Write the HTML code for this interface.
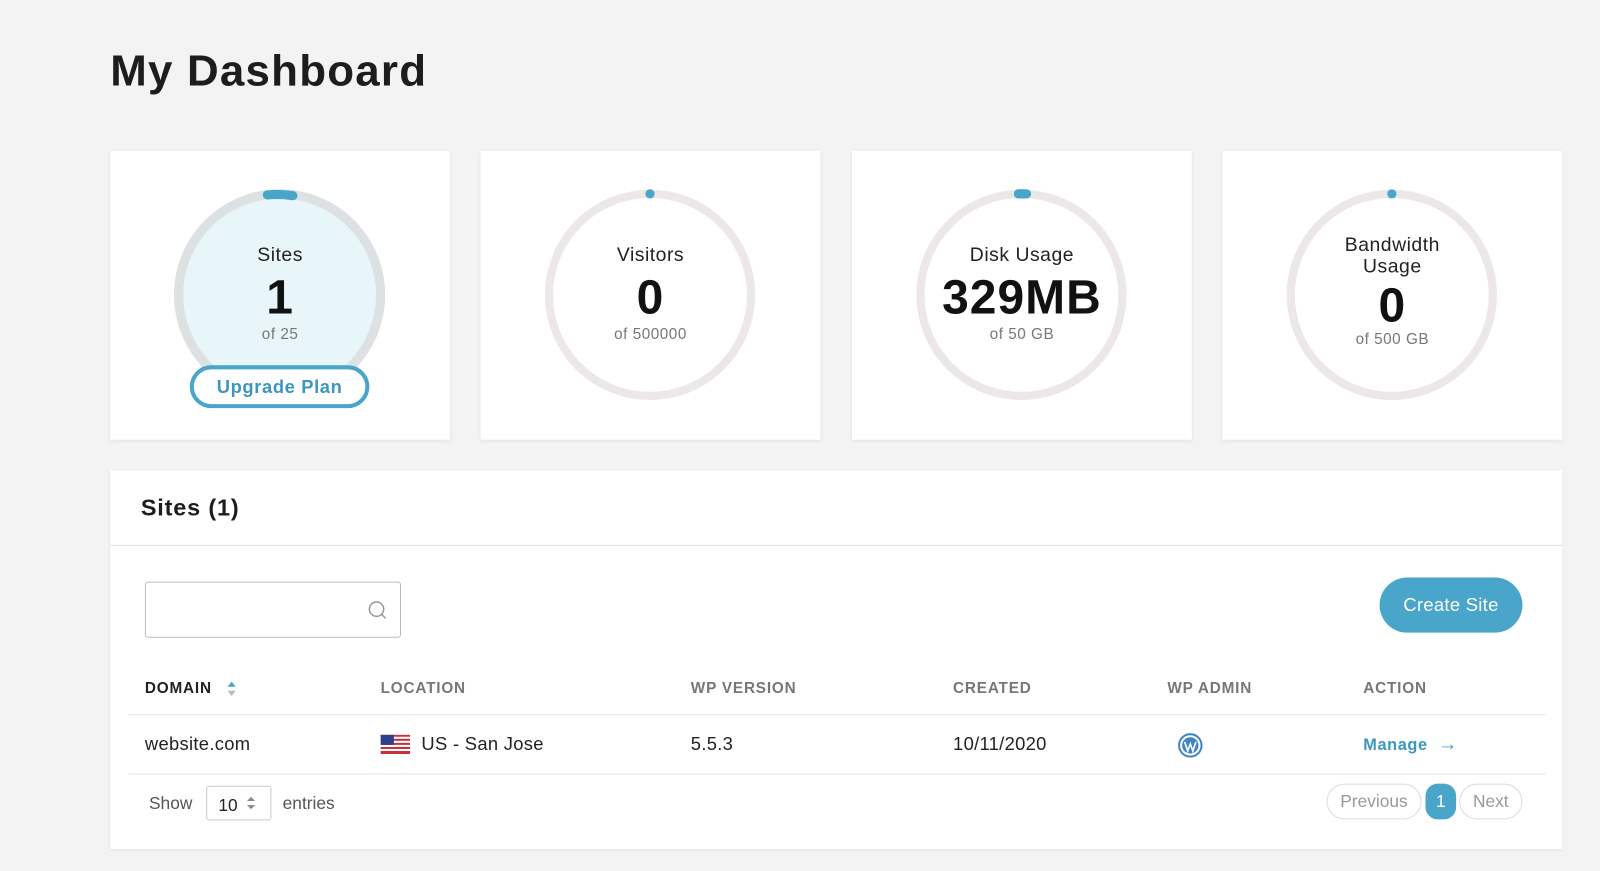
<!DOCTYPE html>
<html><head><style>
body{margin:0;width:1600px;height:871px;background:#f4f3f4;font-family:"Liberation Sans",sans-serif;color:#1d1d1f;position:relative;overflow:hidden}
#w{position:absolute;left:0;top:0;width:1568px;height:854px;transform:scale(1.0204);transform-origin:0 0}
h1{position:absolute;left:108px;top:46px;margin:0;font-size:43px;font-weight:bold;letter-spacing:1.2px}
.card{position:absolute;top:148px;width:333px;height:283px;background:#fff;box-shadow:0 1px 4px rgba(0,0,0,.08)}
.card svg{position:absolute;left:61px;top:36px}
.t{position:absolute;left:0;width:100%;text-align:center}
.lbl{font-size:19px;color:#222;letter-spacing:.5px}
.num{font-size:47px;font-weight:bold;color:#111;letter-spacing:1px}
.of{font-size:15px;color:#777;letter-spacing:.5px}
.panel{position:absolute;left:108px;top:461px;width:1423px;height:371px;background:#fff;box-shadow:0 1px 4px rgba(0,0,0,.08)}
.abs{position:absolute}
.th{position:absolute;top:666px;font-size:15px;font-weight:bold;color:#777;letter-spacing:.8px}
.td{position:absolute;top:719px;font-size:18px;color:#222;letter-spacing:.3px}
</style></head><body><div id="w">
<h1>My Dashboard</h1>

<div class="card" style="left:108px">
<svg width="212" height="212"><circle cx="105" cy="105" r="99" fill="#e8f5f9" stroke="#dde1e3" stroke-width="9"/><path d="M93 7 A99 99 0 0 1 118 7.8" fill="none" stroke="#49a6ca" stroke-width="9" stroke-linecap="round"/></svg>
<div class="t lbl" style="top:92px">Sites</div>
<div class="t num" style="top:115px">1</div>
<div class="t of" style="top:171px">of 25</div>
<div class="abs" style="left:78px;top:210px;width:176px;height:42px;border:4px solid #49a6ca;border-radius:22px;background:#fff;box-sizing:border-box;text-align:center;line-height:34px;font-size:18px;font-weight:bold;color:#3d97bd;letter-spacing:.6px">Upgrade Plan</div>
</div>

<div class="card" style="left:471px">
<svg width="212" height="212"><circle cx="105" cy="105" r="99" fill="#fff" stroke="#ece8e8" stroke-width="8"/><circle cx="105" cy="6" r="4.5" fill="#49a6ca"/></svg>
<div class="t lbl" style="top:92px">Visitors</div>
<div class="t num" style="top:115px">0</div>
<div class="t of" style="top:171px">of 500000</div>
</div>

<div class="card" style="left:835px">
<svg width="212" height="212"><circle cx="105" cy="105" r="99" fill="#fff" stroke="#ece8e8" stroke-width="8"/><path d="M102 6 L110 6" stroke="#49a6ca" stroke-width="9" stroke-linecap="round"/></svg>
<div class="t lbl" style="top:92px">Disk Usage</div>
<div class="t num" style="top:115px">329MB</div>
<div class="t of" style="top:171px">of 50 GB</div>
</div>

<div class="card" style="left:1198px">
<svg width="212" height="212"><circle cx="105" cy="105" r="99" fill="#fff" stroke="#ece8e8" stroke-width="8"/><circle cx="105" cy="6" r="4.5" fill="#49a6ca"/></svg>
<div class="t lbl" style="top:82px;line-height:21px">Bandwidth<br>Usage</div>
<div class="t num" style="top:123px">0</div>
<div class="t of" style="top:176px">of 500 GB</div>
</div>

<div class="panel"></div>
<div class="abs" style="left:138px;top:484px;font-size:23px;font-weight:bold;letter-spacing:.8px">Sites (1)</div>
<div class="abs" style="left:108px;top:534px;width:1423px;height:1px;background:#e2e2e2"></div>
<div class="abs" style="left:142px;top:570px;width:251px;height:55px;border:1px solid #bbb;border-radius:3px;box-sizing:border-box"></div>
<svg class="abs" style="left:360px;top:588px" width="20" height="20"><circle cx="9" cy="9" r="7" fill="none" stroke="#999" stroke-width="1.5"/><path d="M14 14 L18 18" stroke="#999" stroke-width="1.5"/></svg>
<div class="abs" style="left:1352px;top:566px;width:140px;height:54px;border-radius:27px;background:#49a6ca;color:#fff;font-size:18px;text-align:center;line-height:54px;letter-spacing:.3px">Create Site</div>

<div class="th" style="left:142px;color:#222">DOMAIN</div>
<svg class="abs" style="left:222px;top:666px" width="10" height="18"><path d="M1 7 L5 2 L9 7Z" fill="#49a6ca"/><path d="M1 11 L5 16 L9 11Z" fill="#bbb"/></svg>
<div class="th" style="left:373px">LOCATION</div>
<div class="th" style="left:677px">WP VERSION</div>
<div class="th" style="left:934px">CREATED</div>
<div class="th" style="left:1144px">WP ADMIN</div>
<div class="th" style="left:1336px">ACTION</div>
<div class="abs" style="left:126px;top:700px;width:1389px;height:1px;background:#e6e6e6"></div>
<div class="td" style="left:142px">website.com</div>
<svg class="abs" style="left:373px;top:720px" width="29" height="19"><rect width="29" height="19" fill="#fff"/><g fill="#c8303a"><rect y="0" width="29" height="2"/><rect y="4" width="29" height="2"/><rect y="8" width="29" height="2"/><rect y="12" width="29" height="2"/><rect y="16" width="29" height="3"/></g><rect width="13" height="10" fill="#2f3f8c"/></svg>
<div class="td" style="left:413px">US - San Jose</div>
<div class="td" style="left:677px">5.5.3</div>
<div class="td" style="left:934px">10/11/2020</div>
<svg class="abs" style="left:1154px;top:718px" width="25" height="25"><circle cx="12.5" cy="12.5" r="11" fill="none" stroke="#3f85c6" stroke-width="2"/><circle cx="12.5" cy="12.5" r="8" fill="#3f85c6"/><path d="M7 9 L10 18 L12.5 11 L15 18 L18 9" stroke="#fff" stroke-width="1.6" fill="none"/></svg>
<div class="abs" style="left:1336px;top:719px;font-size:16px;font-weight:bold;color:#3d97bd;letter-spacing:.6px">Manage &nbsp;<span style="font-size:19px">→</span></div>
<div class="abs" style="left:126px;top:758px;width:1389px;height:1px;background:#e6e6e6"></div>
<div class="abs" style="left:146px;top:778px;font-size:17px;color:#555">Show</div>
<div class="abs" style="left:202px;top:770px;width:64px;height:34px;border:1px solid #ccc;border-radius:3px;box-sizing:border-box;font-size:17px;padding:9px 0 0 11px;color:#222">10</div>
<svg class="abs" style="left:241px;top:780px" width="10" height="14"><path d="M1 5 L5 1 L9 5Z M1 9 L5 13 L9 9Z" fill="#888"/></svg>
<div class="abs" style="left:277px;top:778px;font-size:17px;color:#555">entries</div>
<div class="abs" style="left:1300px;top:768px;width:93px;height:35px;border:1px solid #ddd;border-radius:18px;box-sizing:border-box;text-align:center;line-height:33px;font-size:17px;color:#999">Previous</div>
<div class="abs" style="left:1397px;top:768px;width:30px;height:35px;border-radius:12px;background:#49a6ca;color:#fff;text-align:center;line-height:35px;font-size:17px">1</div>
<div class="abs" style="left:1430px;top:768px;width:62px;height:35px;border:1px solid #ddd;border-radius:18px;box-sizing:border-box;text-align:center;line-height:33px;font-size:17px;color:#999">Next</div>
</div></body></html>
